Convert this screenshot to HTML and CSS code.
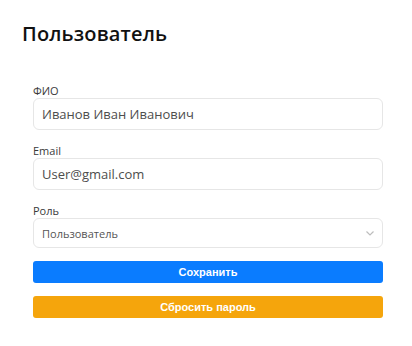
FILE: index.html
```html
<!DOCTYPE html>
<html lang="ru">
<head>
<meta charset="utf-8">
<title>Пользователь</title>
<link rel="stylesheet" href="styles.css">
</head>
<body>
<div class="page">
  <h1 class="title">Пользователь</h1>
  <form class="form">
    <div class="field">
      <label class="label">ФИО</label>
      <div class="input">Иванов Иван Иванович</div>
    </div>
    <div class="field">
      <label class="label">Email</label>
      <div class="input">User@gmail.com</div>
    </div>
    <div class="field">
      <label class="label">Роль</label>
      <div class="input select">
        <span>Пользователь</span>
        <svg class="chevron" width="8" height="5" viewBox="0 0 8 5"><path d="M0.5 0.5 L4 4 L7.5 0.5" fill="none" stroke="#bdbdbd" stroke-width="1.2"/></svg>
      </div>
    </div>
    <div class="buttons">
      <button type="button" class="btn btn-save">Сохранить</button>
      <button type="button" class="btn btn-reset">Сбросить пароль</button>
    </div>
  </form>
</div>
</body>
</html>
```
FILE: styles.css
```css
html, body {
  margin: 0;
  padding: 0;
  background: #ffffff;
}
body {
  font-family: "Open Sans", "Noto Sans", sans-serif;
  color: #222;
}
.page {
  padding: 22px 29px 0 22px;
}
.title {
  margin: 0;
  font-size: 20px;
  line-height: 24px;
  font-weight: 600;
  letter-spacing: 0.15px;
  color: #111;
}
.form {
  margin: 38px 0 0 11px;
  width: 350px;
  display: flex;
  flex-direction: column;
  gap: 14px;
}
.field {
  display: flex;
  flex-direction: column;
}
.label {
  font-size: 11px;
  line-height: 14px;
  color: #3a3a3a;
}
.input {
  box-sizing: border-box;
  height: 32px;
  border: 1px solid #e6e6e6;
  border-radius: 6px;
  padding: 0 8px;
  display: flex;
  align-items: center;
  font-size: 13px;
  color: #4d4d4d;
}
.select {
  height: 30px;
  justify-content: space-between;
  font-size: 11px;
  color: #555;
  padding-right: 8px;
}
.chevron {
  display: block;
}
.buttons {
  display: flex;
  flex-direction: column;
  gap: 13px;
  margin-top: -1px;
}
.btn {
  box-sizing: border-box;
  height: 22px;
  width: 100%;
  border: none;
  border-radius: 3px;
  color: #fff;
  font-family: "Liberation Sans", Arial, sans-serif;
  font-weight: 700;
  font-size: 11px;
  padding: 0;
}
.btn-save {
  background: #0a7cff;
}
.btn-reset {
  background: #f5a50c;
}
```
